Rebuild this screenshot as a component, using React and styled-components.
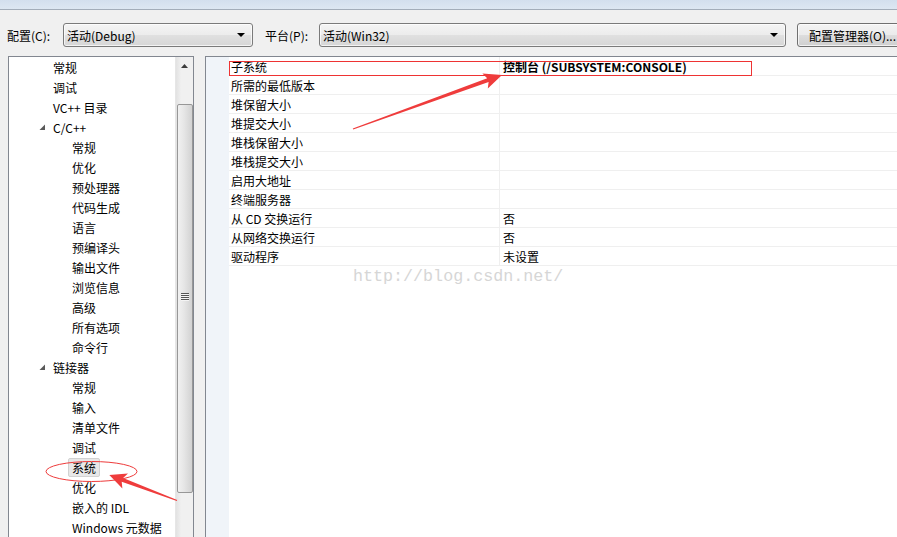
import React from 'react';
import styled, { createGlobalStyle } from 'styled-components';

const GlobalStyle = createGlobalStyle`
  html, body {
    margin: 0;
    padding: 0;
  }
  body {
    background: #f0f0f0;
    font-family: "Noto Sans CJK SC", "Microsoft YaHei", sans-serif;
    font-size: 12px;
    color: #000;
  }
`;

const treeItems = [
  { label: '常规', level: 1 },
  { label: '调试', level: 1 },
  { label: 'VC++ 目录', level: 1 },
  { label: 'C/C++', level: 1, expanded: true },
  { label: '常规', level: 2 },
  { label: '优化', level: 2 },
  { label: '预处理器', level: 2 },
  { label: '代码生成', level: 2 },
  { label: '语言', level: 2 },
  { label: '预编译头', level: 2 },
  { label: '输出文件', level: 2 },
  { label: '浏览信息', level: 2 },
  { label: '高级', level: 2 },
  { label: '所有选项', level: 2 },
  { label: '命令行', level: 2 },
  { label: '链接器', level: 1, expanded: true },
  { label: '常规', level: 2 },
  { label: '输入', level: 2 },
  { label: '清单文件', level: 2 },
  { label: '调试', level: 2 },
  { label: '系统', level: 2, selected: true },
  { label: '优化', level: 2 },
  { label: '嵌入的 IDL', level: 2 },
  { label: 'Windows 元数据', level: 2 },
];

const properties = [
  { name: '子系统', value: '控制台 (/SUBSYSTEM:CONSOLE)', bold: true },
  { name: '所需的最低版本', value: '' },
  { name: '堆保留大小', value: '' },
  { name: '堆提交大小', value: '' },
  { name: '堆栈保留大小', value: '' },
  { name: '堆栈提交大小', value: '' },
  { name: '启用大地址', value: '' },
  { name: '终端服务器', value: '' },
  { name: '从 CD 交换运行', value: '否' },
  { name: '从网络交换运行', value: '否' },
  { name: '驱动程序', value: '未设置' },
];

const Window = styled.div`
  position: relative;
  width: 897px;
  height: 537px;
  overflow: hidden;
  background: #f0f0f0;
  display: flex;
  flex-direction: column;
`;

const TitleStrip = styled.div`
  height: 9px;
  background: linear-gradient(#d3dfed, #dde7f2);
  border-bottom: 1px solid #a3adb9;
`;

const Toolbar = styled.div`
  display: flex;
  align-items: center;
  height: 24px;
  margin-top: 13px;
  padding-left: 7px;
`;

const Label = styled.span`
  width: ${(p) => p.$width}px;
  flex-shrink: 0;
  margin-left: ${(p) => p.$offset || 0}px;
  white-space: nowrap;
`;

const Combo = styled.div`
  box-sizing: border-box;
  width: ${(p) => p.$width}px;
  flex-shrink: 0;
  height: 24px;
  border: 1px solid #7a7a7a;
  border-radius: 3px;
  background: linear-gradient(#f4f4f4 0%, #ececec 50%, #e0e0e0 51%, #d6d6d6 100%);
  display: flex;
  align-items: center;
  padding: 0 7px 0 3px;
  box-shadow: inset 0 0 0 1px rgba(255, 255, 255, 0.7);
`;

const ComboText = styled.span`
  flex: 1;
`;

const DropArrow = styled.span`
  width: 0;
  height: 0;
  border-left: 4px solid transparent;
  border-right: 4px solid transparent;
  border-top: 4px solid #000;
`;

const Button = styled.div`
  box-sizing: border-box;
  margin-left: 11px;
  width: 110px;
  flex-shrink: 0;
  height: 24px;
  border: 1px solid #707070;
  border-radius: 3px;
  background: linear-gradient(#f3f3f3 0%, #ebebeb 50%, #dddddd 51%, #cfcfcf 100%);
  display: flex;
  align-items: center;
  padding-left: 11px;
  white-space: nowrap;
  box-shadow: inset 0 0 0 1px rgba(255, 255, 255, 0.7);
`;

const Main = styled.div`
  flex: 1;
  min-height: 0;
  display: flex;
  gap: 11px;
  margin-top: 9px;
  padding-left: 8px;
`;

const TreePanel = styled.div`
  width: 186px;
  flex-shrink: 0;
  box-sizing: border-box;
  border: 1px solid #828790;
  border-bottom: none;
  background: #fff;
  display: flex;
`;

const TreeList = styled.div`
  flex: 1;
  overflow: hidden;
`;

const TreeRow = styled.div`
  height: 20px;
  display: flex;
  align-items: center;
  padding-left: ${(p) => (p.$level === 1 ? 30 : 59)}px;
  white-space: nowrap;
`;

const Expander = styled.span`
  width: 10px;
  display: flex;
  align-items: center;
`;

const TreeText = styled.span`
  box-sizing: border-box;
  height: 19px;
  display: flex;
  align-items: center;
  padding: 0 3px;
  border: 1px solid ${(p) => (p.$selected ? '#d2d2d2' : 'transparent')};
  border-radius: 2px;
  background: ${(p) => (p.$selected ? '#e8e8e8' : 'transparent')};
`;

const ScrollBar = styled.div`
  width: 17px;
  flex-shrink: 0;
  background: linear-gradient(to right, #e2e2e2, #f0f0f0 30%, #f0f0f0);
  border-left: 1px solid #e6e6e6;
  display: flex;
  flex-direction: column;
  align-items: center;
`;

const ScrollArrow = styled.div`
  height: 17px;
  display: flex;
  align-items: center;
  justify-content: center;
`;

const ScrollThumb = styled.div`
  box-sizing: border-box;
  margin-top: 30px;
  width: 16px;
  height: 389px;
  border: 1px solid #979797;
  border-radius: 2px;
  background: linear-gradient(to right, #f1f1f1, #e5e5e5 45%, #d2d2d2 100%);
  display: flex;
  align-items: center;
  justify-content: center;
`;

const Grip = styled.div`
  width: 8px;
  height: 8px;
  margin-top: -4px;
  background: repeating-linear-gradient(#555 0 1px, #f4f4f4 1px 2px);
`;

const GridPanel = styled.div`
  flex: 1;
  box-sizing: border-box;
  border-left: 1px solid #828790;
  border-top: 1px solid #828790;
  background: #fff;
  display: flex;
  min-width: 0;
`;

const Gutter = styled.div`
  width: 23px;
  flex-shrink: 0;
  background: #f0f4f9;
`;

const Grid = styled.div`
  flex: 1;
  min-width: 0;
`;

const PropRow = styled.div`
  display: grid;
  grid-template-columns: 271px 1fr;
  height: 19px;
  box-sizing: border-box;
  border-bottom: 1px solid #efefef;
`;

const PropName = styled.div`
  padding-left: 2px;
  display: flex;
  align-items: center;
  border-right: 1px solid #efefef;
  white-space: nowrap;
`;

const PropValue = styled.div`
  padding-left: 3px;
  display: flex;
  align-items: center;
  font-weight: ${(p) => (p.$bold ? 700 : 400)};
  white-space: nowrap;
`;

const Annotations = styled.svg`
  position: absolute;
  left: 0;
  top: 0;
  pointer-events: none;
`;

const Watermark = styled.div`
  position: absolute;
  left: 353px;
  top: 267px;
  font-family: "Liberation Mono", monospace;
  font-size: 16.7px;
  color: #d6d6d6;
  pointer-events: none;
`;

export default function App() {
  return (
    <>
      <GlobalStyle />
      <Window>
        <TitleStrip />
        <Toolbar>
          <Label $width={56}>配置(C):</Label>
          <Combo $width={190}>
            <ComboText>活动(Debug)</ComboText>
            <DropArrow />
          </Combo>
          <Label $width={54} $offset={12}>平台(P):</Label>
          <Combo $width={467}>
            <ComboText>活动(Win32)</ComboText>
            <DropArrow />
          </Combo>
          <Button>配置管理器(O)...</Button>
        </Toolbar>
        <Main>
          <TreePanel>
            <TreeList>
              {treeItems.map((item, i) => (
                <TreeRow key={i} $level={item.level}>
                  {item.level === 1 && (
                    <Expander>
                      {item.expanded && (
                        <svg width="7" height="7" viewBox="0 0 7 7">
                          <polygon points="6,0.5 6,6 0.5,6" fill="#595959" />
                        </svg>
                      )}
                    </Expander>
                  )}
                  <TreeText $selected={item.selected}>{item.label}</TreeText>
                </TreeRow>
              ))}
            </TreeList>
            <ScrollBar>
              <ScrollArrow>
                <svg width="7" height="4" viewBox="0 0 7 4">
                  <polygon points="3.5,0 7,4 0,4" fill="#3c3c3c" />
                </svg>
              </ScrollArrow>
              <ScrollThumb>
                <Grip />
              </ScrollThumb>
            </ScrollBar>
          </TreePanel>
          <GridPanel>
            <Gutter />
            <Grid>
              {properties.map((p, i) => (
                <PropRow key={i}>
                  <PropName>{p.name}</PropName>
                  <PropValue $bold={p.bold}>{p.value}</PropValue>
                </PropRow>
              ))}
            </Grid>
          </GridPanel>
        </Main>
        <Watermark>http://blog.csdn.net/</Watermark>
        <Annotations width="897" height="537" viewBox="0 0 897 537">
          <rect x="229.5" y="61.5" width="522" height="14" fill="none" stroke="#ee3333" strokeWidth="1" />
          <ellipse cx="91.5" cy="471.5" rx="45.5" ry="10" fill="none" stroke="#ee3b3b" strokeWidth="1" />
          <polygon
            points="352.8,128.5 487.2,78.2 482.4,73.6 502,75 487.8,88.6 488.6,82 353.2,129.5"
            fill="#ef3c3c"
          />
          <polygon
            points="177.2,500 123.1,478 128,473.5 109.3,475 122.4,488.5 121.7,481.8 176.8,501"
            fill="#ef3c3c"
          />
        </Annotations>
      </Window>
    </>
  );
}
